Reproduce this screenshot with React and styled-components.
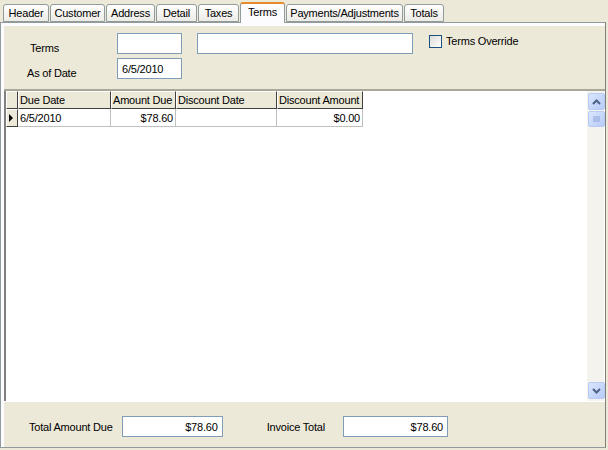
import React from 'react';
import styled, { createGlobalStyle } from 'styled-components';

const Global = createGlobalStyle`
  html, body { margin: 0; padding: 0; background: #ece9d8; }
  body { font-family: "Liberation Sans", Arial, sans-serif; font-size: 11px; color: #000; letter-spacing: -0.2px; }
`;

const Screen = styled.div`
  width: 608px;
  height: 450px;
  display: flex;
  flex-direction: column;
  background: #ece9d8;
`;

const TabStrip = styled.div`
  display: flex;
  align-items: flex-end;
  height: 22px;
  padding-left: 3px;
  gap: 1px;
`;

const Tab = styled.div`
  width: ${p => p.w}px;
  height: ${p => (p.active ? 21 : 18)}px;
  box-sizing: border-box;
  border: 1px solid #919b9c;
  border-bottom: ${p => (p.active ? 'none' : '1px solid #919b9c')};
  border-top: ${p => (p.active ? '2px solid #e68b2c' : '1px solid #919b9c')};
  border-radius: 3px 3px 0 0;
  background: ${p => (p.active ? '#fcfcfe' : 'linear-gradient(#fefefe, #ecebe6)')};
  display: flex;
  align-items: ${p => (p.active ? 'flex-start' : 'center')};
  padding-top: ${p => (p.active ? 2 : 0)}px;
  justify-content: center;
  white-space: nowrap;
  margin-bottom: ${p => (p.active ? -1 : 0)}px;
  position: relative;
  z-index: ${p => (p.active ? 1 : 0)};
`;

const Page = styled.div`
  flex: 1;
  margin: 0 2px 2px 0;
  border: 1px solid #919b9c;
  border-right-color: #807f7a;
  display: flex;
  flex-direction: column;
  padding: 3px 0 0 3px;
  background: #fcfcfe;
`;

const TopPanel = styled.div`
  height: 65px;
  background: #ece9d8;
  border-bottom: 2px solid #a9a69a;
  display: flex;
  padding: 7px 0 0 23px;
  box-sizing: border-box;
`;

const LabelCol = styled.div`
  display: flex;
  flex-direction: column;
  width: 90px;
  padding-top: 9px;
  gap: 13px;
`;

const InputCol = styled.div`
  display: flex;
  flex-direction: column;
  gap: 4px;
`;

const Field = styled.div`
  width: ${p => p.w}px;
  height: 21px;
  box-sizing: border-box;
  border: 1px solid #7f9db9;
  background: #fff;
  display: flex;
  align-items: center;
  justify-content: ${p => (p.right ? 'flex-end' : 'flex-start')};
  padding: 0 4px;
  white-space: nowrap;
`;

const Check = styled.label`
  display: flex;
  align-items: flex-start;
  gap: 4px;
  margin-left: 16px;
  padding-top: 2px;
`;

const Box = styled.span`
  width: 11px;
  height: 11px;
  border: 1px solid #1c5180;
  background: linear-gradient(135deg, #dcdcd6, #fff);
`;

const GridArea = styled.div`
  flex: 1;
  display: flex;
  background: #fff;
  border-left: 2px solid #808080;
`;

const Grid = styled.div`
  flex: 1;
`;

const Row = styled.div`
  display: flex;
  height: 18px;
`;

const HeadCell = styled.div`
  width: ${p => p.w}px;
  box-sizing: border-box;
  background: #ece9d8;
  border-right: 1px solid #404040;
  border-bottom: 1px solid #404040;
  border-top: 1px solid #fff;
  border-left: 1px solid #fff;
  display: flex;
  align-items: center;
  white-space: nowrap;
  overflow: hidden;
  padding: 0 1px;
`;

const Cell = styled.div`
  width: ${p => p.w}px;
  box-sizing: border-box;
  border-right: 1px solid #c0c0c0;
  border-bottom: 1px solid #c0c0c0;
  display: flex;
  align-items: center;
  justify-content: ${p => (p.right ? 'flex-end' : 'flex-start')};
  padding: 0 2px;
`;

const Scroll = styled.div`
  width: 17px;
  margin-right: 1px;
  display: flex;
  flex-direction: column;
  justify-content: space-between;
  background: #f4f3ee;
  padding: 2px 0;
`;

const ScrollBtn = styled.div`
  width: 15px;
  height: ${p => p.h || 15}px;
  margin: ${p => p.mt || 0}px 1px 0;
  border: 1px solid #b8cbf5;
  border-radius: 2px;
  background: linear-gradient(135deg, #dbe6fe, #b6cbf8);
  display: flex;
  align-items: center;
  justify-content: center;
`;

const Bottom = styled.div`
  height: 46px;
  background: #ece9d8;
  border-top: 1px solid #fff;
  display: flex;
  align-items: center;
  padding: 4px 0 0 25px;
  box-sizing: border-box;
`;

const BottomLabel = styled.span`
  margin: 0 ${p => p.mr}px 0 ${p => p.ml}px;
  white-space: nowrap;
`;

const tabs = [
  ['Header', 46], ['Customer', 55], ['Address', 49], ['Detail', 41], ['Taxes', 41],
  ['Terms', 45], ['Payments/Adjustments', 117], ['Totals', 40],
];

const cols = [[12], [93, 'Due Date'], [65, 'Amount Due'], [101, 'Discount Date'], [86, 'Discount Amount']];

const Chevron = ({ up }) => (
  <svg width="9" height="6" viewBox="0 0 9 6">
    <path d={up ? 'M1 5 L4.5 1.5 L8 5' : 'M1 1 L4.5 4.5 L8 1'} stroke="#4d6185" strokeWidth="2" fill="none" />
  </svg>
);

const App = () => (
  <Screen>
    <Global />
    <TabStrip>
      {tabs.map(([t, w]) => (
        <Tab key={t} w={w} active={t === 'Terms'}>{t}</Tab>
      ))}
    </TabStrip>
    <Page>
      <TopPanel>
        <LabelCol>
          <span style={{ paddingLeft: 3 }}>Terms</span>
          <span>As of Date</span>
        </LabelCol>
        <InputCol>
          <Field w={65} />
          <Field w={65}>6/5/2010</Field>
        </InputCol>
        <div style={{ marginLeft: 15 }}><Field w={216} /></div>
        <Check><Box />Terms Override</Check>
      </TopPanel>
      <GridArea>
        <Grid>
          <Row>
            {cols.map(([w, t], i) => <HeadCell key={i} w={w}>{t}</HeadCell>)}
          </Row>
          <Row>
            <HeadCell w={12}>
              <svg width="6" height="10" viewBox="0 0 6 10"><path d="M1 1 L5 5 L1 9 Z" fill="#000" /></svg>
            </HeadCell>
            <Cell w={93}>6/5/2010</Cell>
            <Cell w={65} right>$78.60</Cell>
            <Cell w={101} />
            <Cell w={86} right>$0.00</Cell>
          </Row>
        </Grid>
        <Scroll>
          <div>
            <ScrollBtn><Chevron up /></ScrollBtn>
            <ScrollBtn h={14} mt={1}>
              <svg width="7" height="7" viewBox="0 0 7 7">
                {[1, 3, 5].map(y => <path key={y} d={`M0 ${y} H7`} stroke="#8ea3d8" />)}
              </svg>
            </ScrollBtn>
          </div>
          <ScrollBtn><Chevron /></ScrollBtn>
        </Scroll>
      </GridArea>
      <Bottom>
        <BottomLabel ml={0} mr={9}>Total Amount Due</BottomLabel>
        <Field w={101} right>$78.60</Field>
        <BottomLabel ml={44} mr={18}>Invoice Total</BottomLabel>
        <Field w={105} right>$78.60</Field>
      </Bottom>
    </Page>
  </Screen>
);

export default App;
